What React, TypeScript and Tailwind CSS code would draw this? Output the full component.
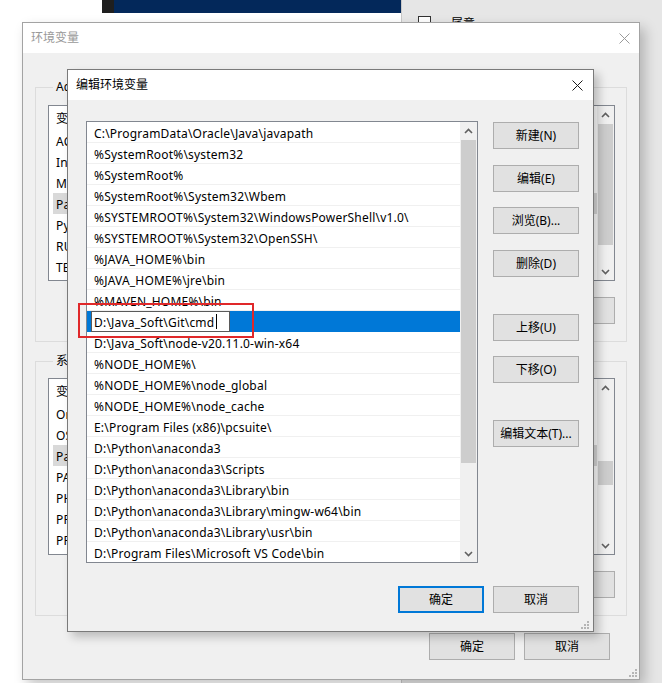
import React from 'react';

const font = 'font-["Noto_Sans","Noto_Sans_CJK_SC",sans-serif]';

const pathEntries = [
  'C:\\ProgramData\\Oracle\\Java\\javapath',
  '%SystemRoot%\\system32',
  '%SystemRoot%',
  '%SystemRoot%\\System32\\Wbem',
  '%SYSTEMROOT%\\System32\\WindowsPowerShell\\v1.0\\',
  '%SYSTEMROOT%\\System32\\OpenSSH\\',
  '%JAVA_HOME%\\bin',
  '%JAVA_HOME%\\jre\\bin',
  '%MAVEN_HOME%\\bin',
  'D:\\Java_Soft\\Git\\cmd',
  'D:\\Java_Soft\\node-v20.11.0-win-x64',
  '%NODE_HOME%\\',
  '%NODE_HOME%\\node_global',
  '%NODE_HOME%\\node_cache',
  'E:\\Program Files (x86)\\pcsuite\\',
  'D:\\Python\\anaconda3',
  'D:\\Python\\anaconda3\\Scripts',
  'D:\\Python\\anaconda3\\Library\\bin',
  'D:\\Python\\anaconda3\\Library\\mingw-w64\\bin',
  'D:\\Python\\anaconda3\\Library\\usr\\bin',
  'D:\\Program Files\\Microsoft VS Code\\bin',
];

const userVars = [
  ['ACSvcPort', '17532'],
  ['IntelliJ IDEA', 'D:\\Java_Soft\\IntelliJ IDEA\\bin;'],
  ['MOZ_PLUGIN_PATH', 'C:\\Program Files (x86)\\Foxit Software\\plugins\\'],
  ['Path', 'C:\\Users\\Administrator\\AppData\\Local\\Microsoft\\WindowsApps;'],
  ['PyCharm', 'D:\\Python\\PyCharm\\bin;'],
  ['RUBYOPT', '-Eutf-8'],
  ['TEMP', '%USERPROFILE%\\AppData\\Local\\Temp'],
];

const sysVars = [
  ['OnlineServices', 'Online Services'],
  ['OS', 'Windows_NT'],
  ['Path', 'C:\\ProgramData\\Oracle\\Java\\javapath;%SystemRoot%\\system32;'],
  ['PATHEXT', '.COM;.EXE;.BAT;.CMD;.VBS;.VBE;.JS;.JSE;.WSF;.WSH;.MSC'],
  ['PHPRC', 'D:\\php'],
  ['PROCESSOR_ARCHITECTURE', 'AMD64'],
  ['PROCESSOR_IDENTIFIER', 'Intel64 Family 6 Model 158 Stepping 10'],
];

function Chevron({ up }: { up?: boolean }) {
  return (
    <svg width="9" height="6" viewBox="0 0 9 6">
      <path
        d={up ? 'M1 5 L4.5 1.5 L8 5' : 'M1 1 L4.5 4.5 L8 1'}
        fill="none"
        stroke="#606060"
        strokeWidth="1.6"
      />
    </svg>
  );
}

function CloseIcon({ color }: { color: string }) {
  return (
    <svg width="11" height="11" viewBox="0 0 11 11">
      <path d="M0.5 0.5 L10.5 10.5 M10.5 0.5 L0.5 10.5" stroke={color} strokeWidth="1" />
    </svg>
  );
}

function Grip() {
  const dots = [
    [6, 0],
    [3, 3],
    [6, 3],
    [0, 6],
    [3, 6],
    [6, 6],
  ];
  return (
    <svg width="8" height="8" viewBox="0 0 8 8">
      {dots.map(([x, y]) => (
        <rect key={`${x}-${y}`} x={x} y={y} width="2" height="2" fill="#b5b5b5" />
      ))}
    </svg>
  );
}

// spacer / thumb classes are passed in full so tailwind picks them up
function Scrollbar({ gap, thumb }: { gap: string; thumb: string }) {
  return (
    <div className="w-[17px] h-full flex flex-col bg-[#f0f0f0]">
      <div className="h-[17px] flex items-center justify-center">
        <Chevron up />
      </div>
      <div className="flex-1 flex flex-col">
        <div className={gap} />
        <div className={`${thumb} mx-[1px] bg-[#cdcdcd]`} />
      </div>
      <div className="h-[17px] flex items-center justify-center">
        <Chevron />
      </div>
    </div>
  );
}

function Btn({ label, primary }: { label: string; primary?: boolean }) {
  return (
    <button
      className={`w-[86px] h-[27px] pt-[1px] bg-[#e1e1e1] text-[12px] leading-none text-black flex items-center justify-center ${
        primary ? 'border-2 border-[#0078d7]' : 'border border-[#adadad]'
      }`}
    >
      {label}
    </button>
  );
}

function VarList({ rows, height, gap, thumb }: { rows: string[][]; height: string; gap: string; thumb: string }) {
  return (
    <div className={`w-[567px] ${height} border border-[#828790] bg-white flex`}>
      <div className="flex-1 overflow-hidden">
        <div className="h-[24px] pt-[2px] flex items-center text-[12px] text-black">
          <div className="w-[170px] pl-[7px] border-r border-[#e5e5e5]">变量</div>
          <div className="pl-[7px]">值</div>
        </div>
        {rows.map(([name, value]) => (
          <div
            key={name}
            className={`h-[21px] ml-[4px] pt-[2px] flex items-center text-[12px] tracking-[0.2px] text-black whitespace-nowrap ${
              name === 'Path' ? 'bg-[#d9d9d9]' : ''
            }`}
          >
            <div className="w-[166px] pl-[3px] overflow-hidden">{name}</div>
            <div className="w-[320px] pl-[7px] overflow-hidden">{value}</div>
          </div>
        ))}
      </div>
      <Scrollbar gap={gap} thumb={thumb} />
    </div>
  );
}

function OuterDialog() {
  return (
    <div className="absolute left-[22px] top-[22px] w-[618px] h-[658px] border border-[#a3a3a3] bg-[#f0f0f0] flex flex-col shadow-[5px_6px_12px_rgba(0,0,0,0.22)]">
      <div className="h-[30px] bg-white flex items-center justify-between pl-[8px] pr-[9px]">
        <span className="text-[12px] text-[#999999]">环境变量</span>
        <CloseIcon color="#9a9a9a" />
      </div>
      <div className="flex-1 flex flex-col pl-[12px] pr-[11px]">
        <fieldset className="mt-[26px] w-[592px] border border-[#dcdcdc] pl-[12px] pr-[11px] pt-[10px] pb-[17px]">
          <legend className="ml-[5px] px-[3px] text-[12px] leading-[16px] tracking-[0.2px] text-black">Administrator 的用户变量(U)</legend>
          <VarList rows={userVars} height="h-[176px]" gap="h-[1px]" thumb="h-[121px]" />
          <div className="mt-[16px] flex justify-end gap-[9px]">
            <Btn label="新建(N)..." />
            <Btn label="编辑(E)..." />
            <Btn label="删除(D)" />
          </div>
        </fieldset>
        <fieldset className="mt-[11px] w-[592px] border border-[#dcdcdc] pl-[12px] pr-[11px] pt-[9px] pb-[17px]">
          <legend className="ml-[5px] px-[3px] text-[12px] leading-[16px] text-black">系统变量(S)</legend>
          <VarList rows={sysVars} height="h-[177px]" gap="h-[65px]" thumb="h-[24px]" />
          <div className="mt-[16px] flex justify-end gap-[9px]">
            <Btn label="新建(W)..." />
            <Btn label="编辑(I)..." />
            <Btn label="删除(L)" />
          </div>
        </fieldset>
        <div className="mt-[17px] flex justify-end gap-[9px] pr-[18px]">
          <Btn label="确定" />
          <Btn label="取消" />
        </div>
        <div className="flex-1 flex items-end justify-end -mr-[9px] pb-[2px]">
          <Grip />
        </div>
      </div>
    </div>
  );
}

function EditDialog() {
  return (
    <div className="absolute left-[67px] top-[69px] w-[527px] h-[563px] border border-[#7a7a7a] bg-[#f0f0f0] flex flex-col shadow-[5px_5px_9px_rgba(0,0,0,0.22)]">
      <div className="h-[30px] bg-white flex items-center justify-between pl-[8px] pr-[10px]">
        <span className="text-[12px] text-black">编辑环境变量</span>
        <CloseIcon color="#1a1a1a" />
      </div>
      <div className="flex-1 flex flex-col pl-[18px] pr-[14px] pt-[21px]">
        <div className="flex">
          <div className="w-[392px] h-[442px] border border-[#828790] bg-white flex">
            <div className="flex-1 overflow-hidden">
              {pathEntries.map((p, i) =>
                i === 9 ? (
                  <div key={p} className="h-[21px] bg-[#0078d7] flex items-center">
                    <div className="ml-[4px] w-[139px] h-[21px] pt-[2px] border border-[#5a5a5a] bg-white flex items-center pl-[2px] text-[12px] tracking-[0.2px] text-black whitespace-nowrap">
                      {p}
                      <span className="ml-[2px] -mt-[2px] w-[1px] h-[15px] bg-black" />
                    </div>
                  </div>
                ) : (
                  <div
                    key={p}
                    className="h-[21px] pt-[3px] border-b border-[#f0f0f0] flex items-center pl-[7px] text-[12px] tracking-[0.2px] text-black whitespace-nowrap"
                  >
                    {p}
                  </div>
                )
              )}
            </div>
            <Scrollbar gap="h-[1px]" thumb="h-[323px]" />
          </div>
          <div className="ml-[15px] pt-[1px] flex flex-col">
            <Btn label="新建(N)" />
            <div className="mt-[16px]"><Btn label="编辑(E)" /></div>
            <div className="mt-[15px]"><Btn label="浏览(B)..." /></div>
            <div className="mt-[16px]"><Btn label="删除(D)" /></div>
            <div className="mt-[37px]"><Btn label="上移(U)" /></div>
            <div className="mt-[15px]"><Btn label="下移(O)" /></div>
            <div className="mt-[37px]"><Btn label="编辑文本(T)..." /></div>
          </div>
        </div>
        <div className="mt-[23px] flex justify-end gap-[9px]">
          <Btn label="确定" primary />
          <Btn label="取消" />
        </div>
        <div className="flex-1 flex items-end justify-end -mr-[10px] pb-[2px]">
          <Grip />
        </div>
      </div>
    </div>
  );
}

export default function App() {
  return (
    <div className={`relative w-[662px] h-[683px] overflow-hidden bg-white ${font}`}>
      {/* desktop behind the dialogs */}
      <div className="absolute left-[102px] top-0 w-[299px] h-[13px] flex">
        <div className="w-[12px] bg-[#1f1f1f]" />
        <div className="flex-1 bg-[#03285a]" />
      </div>
      <div className="absolute left-[401px] top-0 right-0 bottom-0 bg-[#e6e6e6] border-l border-[#c8c8c8]">
        <div className="ml-[16px] mt-[16px] flex items-start gap-[20px]">
          <div className="w-[13px] h-[13px] border border-[#333333] bg-white" />
          <span className="-mt-[1px] text-[12px] text-black">属意</span>
        </div>
      </div>

      <OuterDialog />
      <EditDialog />

      {/* annotation box */}
      <div className="absolute left-[78px] top-[303px] w-[176px] h-[35px] border-2 border-[#e0282a]" />
    </div>
  );
}
